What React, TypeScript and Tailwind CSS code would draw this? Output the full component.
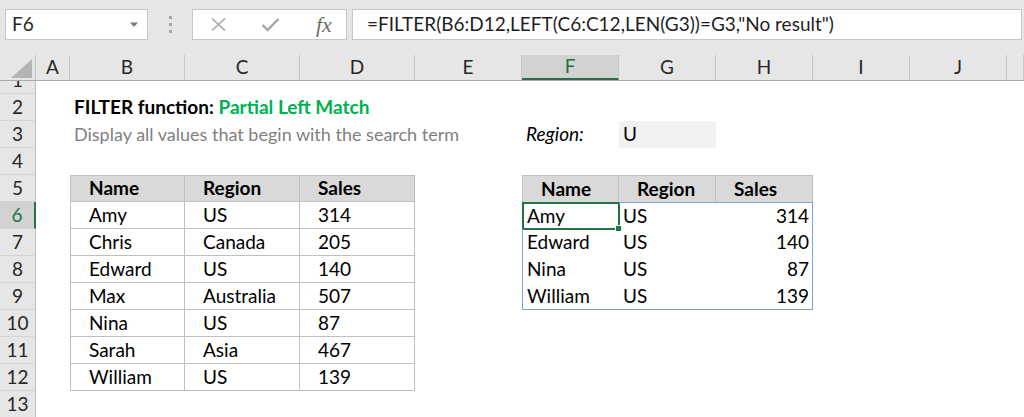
import type { ReactNode } from "react";

type Cell = { text?: ReactNode; cls?: string; overlay?: boolean };

const COLS = [
  { key: "A", w: "w-[34px]" },
  { key: "B", w: "w-[115px]" },
  { key: "C", w: "w-[115px]" },
  { key: "D", w: "w-[115px]" },
  { key: "E", w: "w-[107px]" },
  { key: "F", w: "w-[97px]" },
  { key: "G", w: "w-[97px]" },
  { key: "H", w: "w-[97px]" },
  { key: "I", w: "w-[97px]" },
  { key: "J", w: "w-[97px]" },
  { key: "K", w: "w-[17px]" },
];

const grid = "border-[#bfbfbf]";
const spill = "border-[#7fa2db]";

const source = [
  ["Amy", "US", "314"],
  ["Chris", "Canada", "205"],
  ["Edward", "US", "140"],
  ["Max", "Australia", "507"],
  ["Nina", "US", "87"],
  ["Sarah", "Asia", "467"],
  ["William", "US", "139"],
];

const result = [
  ["Amy", "US", "314"],
  ["Edward", "US", "140"],
  ["Nina", "US", "87"],
  ["William", "US", "139"],
];

function buildCells() {
  const rows: Record<number, Record<string, Cell>> = {};
  for (let r = 1; r <= 13; r++) rows[r] = {};

  rows[2].B = {
    text: (
      <span className="font-bold text-black">
        FILTER function: <span className="text-[#00b050]">Partial Left Match</span>
      </span>
    ),
    cls: "pl-[4px]",
  };
  rows[3].B = {
    text: "Display all values that begin with the search term",
    cls: "pl-[4px] text-[#7f7f7f] text-[18px]",
  };
  rows[3].F = { text: "Region:", cls: "pl-[4px] italic" };
  rows[3].G = { text: "U", cls: "pl-[4px] bg-[#f2f2f2]" };

  // source table
  ["Name", "Region", "Sales"].forEach((h, i) => {
    const k = ["B", "C", "D"][i];
    rows[5][k] = {
      text: h,
      cls: `font-bold bg-[#d9d9d9] pl-[18px] border-t border-r border-b ${grid} ${i === 0 ? "border-l" : ""}`,
    };
  });
  source.forEach((row, ri) => {
    row.forEach((v, i) => {
      const k = ["B", "C", "D"][i];
      rows[6 + ri][k] = {
        text: v,
        cls: `pl-[18px] border-r border-b ${grid} ${i === 0 ? "border-l" : ""}`,
      };
    });
  });

  // spill result
  ["Name", "Region", "Sales"].forEach((h, i) => {
    const k = ["F", "G", "H"][i];
    rows[5][k] = {
      text: h,
      cls: `font-bold bg-[#d9d9d9] pl-[18px] border-t border-r ${grid} ${i === 0 ? "border-l" : ""}`,
    };
  });
  result.forEach((row, ri) => {
    row.forEach((v, i) => {
      const k = ["F", "G", "H"][i];
      const last = ri === result.length - 1;
      rows[6 + ri][k] = {
        text: v,
        cls: [
          spill,
          i === 2 ? "justify-end pr-[3px] border-r" : "pl-[4px]",
          i === 0 ? "border-l" : "",
          ri === 0 ? "border-t" : "",
          last ? "border-b" : "",
        ].join(" "),
        overlay: ri === 0 && i === 0,
      };
    });
  });
  return rows;
}

function RowHeader({ n, active }: { n: number; active?: boolean }) {
  return (
    <div
      className={`w-[36px] h-full shrink-0 flex items-center justify-center border-b border-[#d4d4d4] ${
        active
          ? "bg-[#d2d2d2] text-[#217346] border-r-2 border-r-[#217346]"
          : "bg-[#e6e6e6] text-[#262626] border-r border-r-[#bdbdbd]"
      }`}
    >
      {n}
    </div>
  );
}

function SheetRow({ n, cells }: { n: number; cells: Record<string, Cell> }) {
  return (
    <div className="flex h-[27px] shrink-0">
      <RowHeader n={n} active={n === 6} />
      {COLS.map((c) => {
        const cell = cells[c.key];
        return (
          <div
            key={c.key}
            className={`${c.w} h-full shrink-0 relative flex items-center whitespace-nowrap ${cell?.cls ?? ""}`}
          >
            {cell?.text}
            {cell?.overlay && (
              <div className="absolute -left-px -top-px -right-px -bottom-px border-2 border-[#217346]">
                <div className="absolute -right-[4px] -bottom-[4px] w-[7px] h-[7px] bg-[#217346] border border-white" />
              </div>
            )}
          </div>
        );
      })}
    </div>
  );
}

function FormulaBar() {
  return (
    <div className="h-[55px] shrink-0 bg-[#e6e6e6] flex items-start pt-[9px] pl-[5px] pr-[2px]">
      <div className="w-[143px] h-[31px] bg-white border border-[#c6c6c6] flex items-center justify-between pl-[6px] pr-[8px]">
        <span className="text-[#262626]">F6</span>
        <svg width="10" height="6" viewBox="0 0 10 6">
          <path d="M1 0.5h8L5 5z" fill="#7a7a7a" />
        </svg>
      </div>
      <div className="w-[44px] h-[31px] flex flex-col items-center justify-center gap-[4px]">
        <span className="w-[3px] h-[3px] bg-[#a6a6a6]" />
        <span className="w-[3px] h-[3px] bg-[#a6a6a6]" />
        <span className="w-[3px] h-[3px] bg-[#a6a6a6]" />
      </div>
      <div className="w-[155px] h-[31px] bg-white border border-[#c6c6c6] flex items-center pl-[17px]">
        <svg width="17" height="15" viewBox="0 0 17 15">
          <path d="M2 1.5L15 13.5M15 1.5L2 13.5" stroke="#a6a6a6" strokeWidth="1.6" fill="none" />
        </svg>
        <svg width="19" height="15" viewBox="0 0 19 15" className="ml-[34px]">
          <path d="M1.5 8L6.5 13L17.5 2" stroke="#a6a6a6" strokeWidth="2.4" fill="none" />
        </svg>
        <span className="ml-[36px] italic text-[#6e6e6e] text-[22px] [font-family:'Liberation_Serif',serif] leading-none">
          fx
        </span>
      </div>
      <div className="flex-1 ml-[5px] h-[31px] bg-white border border-[#c6c6c6] flex items-center pl-[14px] text-[#1f1f1f] whitespace-nowrap">
        =FILTER(B6:D12,LEFT(C6:C12,LEN(G3))=G3,"No result")
      </div>
    </div>
  );
}

function ColumnHeaders() {
  return (
    <div className="flex h-[26px] shrink-0 bg-[#e6e6e6] border-b border-[#ababab]">
      <div className="w-[36px] h-full shrink-0 border-r border-[#c6c6c6] flex items-end justify-end pr-[3px] pb-[2px]">
        <svg width="21" height="19" viewBox="0 0 21 19">
          <path d="M21 0V19H0z" fill="#b4b4b4" />
        </svg>
      </div>
      {COLS.map((c) => (
        <div
          key={c.key}
          className={`${c.w} h-full shrink-0 flex items-center justify-center border-r border-[#c6c6c6] ${
            c.key === "F" ? "bg-[#d2d2d2] text-[#217346] border-b-2 border-b-[#217346]" : "text-[#262626]"
          }`}
        >
          {c.key === "K" ? "" : c.key}
        </div>
      ))}
    </div>
  );
}

export default function App() {
  const rows = buildCells();
  return (
    <div className="w-[1024px] h-[417px] overflow-hidden bg-white flex flex-col text-[19px] text-black [font-family:Lato,sans-serif]">
      <FormulaBar />
      <ColumnHeaders />
      <div className="h-[13px] shrink-0 overflow-hidden flex flex-col justify-end">
        <SheetRow n={1} cells={rows[1]} />
      </div>
      {Array.from({ length: 12 }, (_, i) => i + 2).map((n) => (
        <SheetRow key={n} n={n} cells={rows[n]} />
      ))}
    </div>
  );
}
